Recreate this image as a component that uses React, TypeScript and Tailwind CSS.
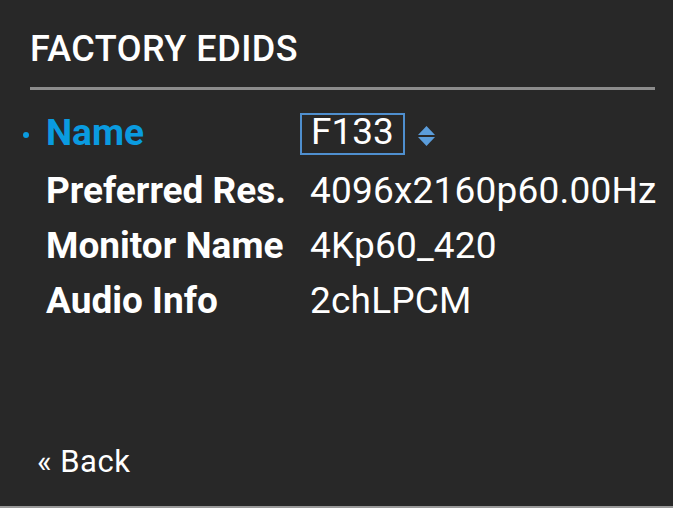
import React from 'react';

const rows = [
  { label: 'Preferred Res.', value: '4096x2160p60.00Hz' },
  { label: 'Monitor Name', value: '4Kp60_420' },
  { label: 'Audio Info', value: '2chLPCM' },
];

const App = () => {
  return (
    <div
      className="w-[673px] h-[508px] bg-[#282828] text-white flex flex-col border-b-2 border-[#9a9a9a]"
      style={{ fontFamily: 'Roboto, "Liberation Sans", sans-serif' }}
    >
      <div className="px-[30px] pt-[29px]">
        <h1 className="text-[36px] leading-[40px] font-medium tracking-[0.5px]">FACTORY EDIDS</h1>
        <div className="mt-[18px] h-[3px] bg-[#8c8c8c] w-[625px]"></div>
      </div>

      <div className="mt-[15px] flex flex-col">
        {/* selected row */}
        <div className="relative flex items-start h-[58px] pl-[46px]">
          <span className="absolute left-[23px] top-[27px] w-[6px] h-[6px] rounded-full bg-[#0a9be0]"></span>
          <span className="w-[254px] text-[37px] leading-[55px] font-bold text-[#0a9be0]">Name</span>
          <span className="mt-[8px] h-[42px] border-2 border-[#4f8fcf] px-[9px] text-[37px] leading-[34px]">F133</span>
          <span className="ml-[13px] mt-[21px] flex flex-col gap-[2px]">
            <svg width="17" height="9" viewBox="0 0 17 9">
              <polygon points="8.5,0 17,9 0,9" fill="#5b9ddb" />
            </svg>
            <svg width="17" height="9" viewBox="0 0 17 9">
              <polygon points="0,0 17,0 8.5,9" fill="#5b9ddb" />
            </svg>
          </span>
        </div>
        {rows.map(r => (
          <div key={r.label} className="flex items-start h-[55px] pl-[46px]">
            <span className="w-[264px] text-[37px] leading-[55px] font-bold">{r.label}</span>
            <span className="text-[37px] leading-[55px] tracking-[0.2px]">{r.value}</span>
          </div>
        ))}
      </div>

      <div className="mt-auto px-[37px] pb-[26px] text-[31px] leading-[36px] tracking-[0.5px]">« Back</div>
    </div>
  );
};

export default App;
